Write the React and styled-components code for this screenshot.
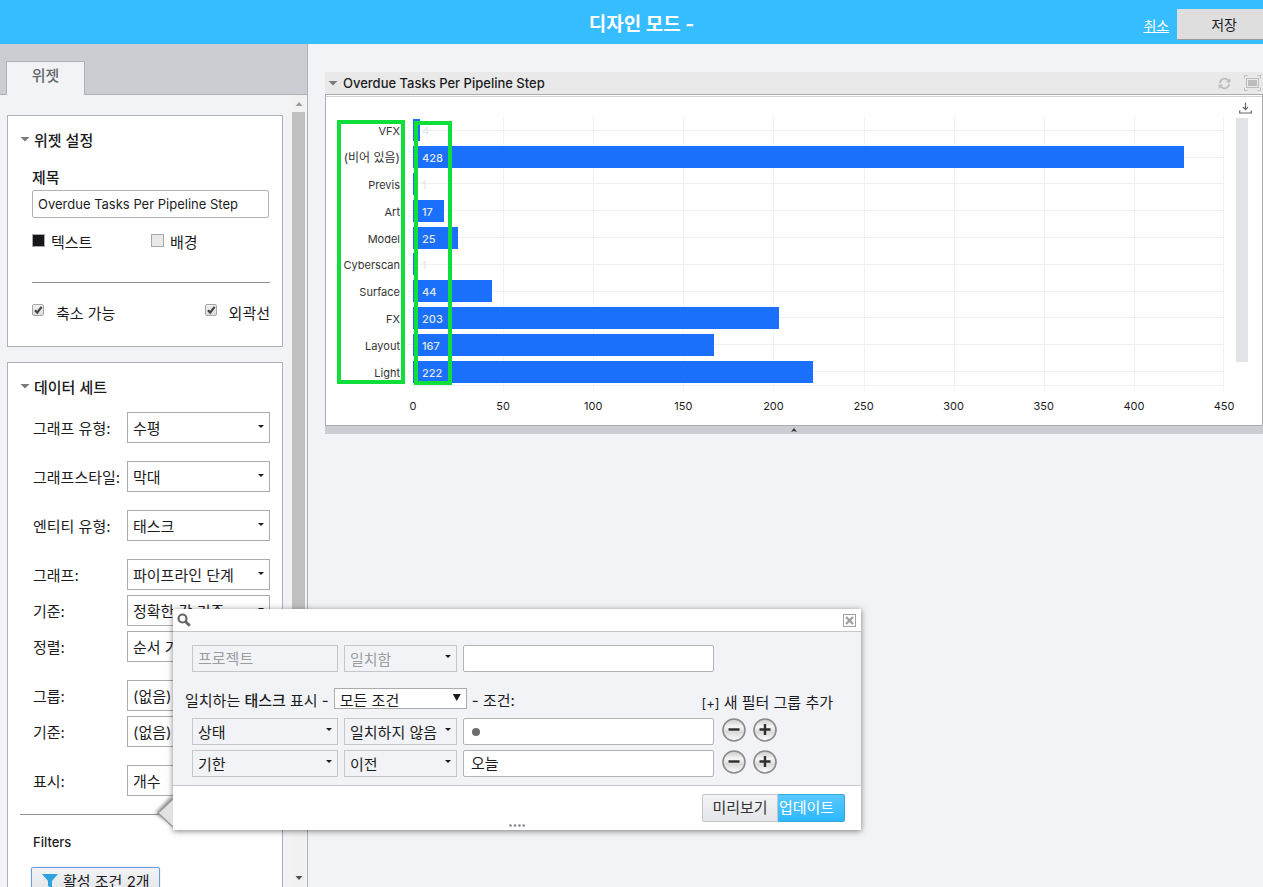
import React from "react";
import styled, { createGlobalStyle, css } from "styled-components";

const GlobalStyle = createGlobalStyle`
  *, *::before, *::after { box-sizing: border-box; }
  body { margin: 0; background: #f1f3f7; }
  body, input, select, button {
    font-family: Inter, "Noto Sans CJK KR", sans-serif;
    font-size: 15px;
    line-height: 20px;
    color: #1c1c1e;
  }
`;

const Page = styled.div`
  position: relative;
  display: flex;
  flex-direction: column;
  height: 100vh;
  overflow: hidden;
`;

const TopBar = styled.header`
  display: grid;
  grid-template-columns: 1fr auto 1fr;
  align-items: center;
  flex: none;
  height: 44px;
  padding-left: 20px;
  background: #36bdff;
`;

const Title = styled.h1`
  grid-column: 2;
  margin: 0;
  padding-top: 5px;
  font-size: 19px;
  line-height: 24px;
  font-weight: 700;
  color: #fff;
`;

const Actions = styled.div`
  display: flex;
  justify-content: flex-end;
  align-items: center;
  gap: 8px;
  padding-top: 5px;
`;

const CancelLink = styled.a`
  padding-top: 2px;
  font-size: 14px;
  color: #fff;
`;

const SaveButton = styled.button`
  height: 31px;
  padding: 2px 26px 0 34px;
  border: 0;
  border-bottom: 1px solid #9b9b9b;
  background: #dedede;
  font-size: 14px;
`;

const Main = styled.div`
  display: flex;
  flex: 1;
  min-height: 0;
`;

const Sidebar = styled.aside`
  display: flex;
  flex-direction: column;
  flex: none;
  width: 308px;
  border-right: 1px solid #b0b1b5;
`;

const TabStrip = styled.nav`
  display: flex;
  align-items: flex-end;
  flex: none;
  height: 51px;
  padding-left: 6px;
  border-bottom: 1px solid #b0b1b5;
  background: #cccdd2;
`;

const Tab = styled.button`
  width: 79px;
  height: 34px;
  margin-bottom: -1px;
  padding: 0 0 6px;
  border: 1px solid #b0b1b5;
  border-bottom: 0;
  background: #f1f3f7;
  font-weight: 500;
  color: #66676b;
`;

const SidebarBody = styled.div`
  display: flex;
  flex: 1;
  min-height: 0;
`;

const Panels = styled.div`
  display: flex;
  flex-direction: column;
  gap: 15px;
  flex: 1;
  padding: 20px 9px 0 7px;
  overflow: hidden;
`;

const ScrollRail = styled.div`
  display: flex;
  flex-direction: column;
  align-items: center;
  width: 13px;
  margin-right: 2px;
  background: #f1f1f1;
`;

const ScrollArrow = styled.svg`
  flex: none;
  width: 8px;
  height: 17px;
`;

const Thumb = styled.div`
  width: 13px;
  flex: 0 1 640px;
  background: #c0c0c0;
`;

const ScrollGap = styled.div`
  flex: 1 0 70px;
`;

const Panel = styled.section`
  flex: none;
  padding: 14px 12px 22px;
  border: 1px solid #b0b1b5;
  background: #fff;
`;

const PanelTitle = styled.h2`
  display: flex;
  align-items: center;
  gap: 4px;
  margin: 0;
  padding-top: 1px;
  font-size: 15px;
  line-height: 20px;
  font-weight: 500;
`;

const Disclosure = styled.span`
  width: 10px;
  height: 5px;
  margin-bottom: ${(p) => p.$lift || 0}px;
  background: #7b7b7b;
  clip-path: polygon(0 0, 100% 0, 50% 100%);
`;

const Settings = styled.div`
  padding: 17px 0 0 12px;
`;

const FieldLabel = styled.label`
  display: block;
  padding-bottom: 2px;
  font-weight: 500;
`;

const inputBox = css`
  border: 1px solid #b2b3b5;
  border-radius: 2px;
  background: #fff;
`;

const TitleInput = styled.input`
  ${inputBox}
  display: block;
  width: 237px;
  height: 28px;
  padding: 0 5px;
  font-size: 13px;
`;

const Swatches = styled.div`
  display: flex;
  padding: 15px 0 29px;
`;

const SwatchButton = styled.button`
  display: flex;
  align-items: flex-start;
  gap: 6px;
  width: 119px;
  padding: 0;
  border: 0;
  background: none;
`;

const SwatchColor = styled.span`
  width: 13px;
  height: 13px;
  margin-top: 1px;
  border: 1px solid #a9a9ab;
  background: ${(p) => p.$color};
`;

const Rule = styled.hr`
  margin: 0;
  border: 0;
  border-top: 1px solid #8f9092;
`;

const Checks = styled.div`
  display: flex;
  justify-content: space-between;
  padding-top: 21px;
`;

const CheckLabel = styled.label`
  display: flex;
  align-items: flex-start;
  gap: 12px;
`;

const CheckWrap = styled.span`
  display: grid;
  & > * { grid-area: 1 / 1; }
  svg { width: 12px; height: 12px; pointer-events: none; visibility: hidden; }
  input:checked + svg { visibility: visible; }
`;

const CheckInput = styled.input`
  appearance: none;
  width: 12px;
  height: 12px;
  margin: 0;
  border: 1px solid #a6a6a6;
  border-radius: 2px;
  background: linear-gradient(#f0f0f0, #dcdcdc);
`;

const FieldGroups = styled.div`
  padding-top: 14px;
`;

const FieldGroup = styled.div`
  display: flex;
  flex-direction: column;
  gap: ${(p) => p.$gap}px;
  padding: 0 0 18px 13px;
`;

const Field = styled.div`
  display: flex;
  justify-content: space-between;
  align-items: center;
  label { white-space: nowrap; padding-top: 3px; }
`;

const SelectWrap = styled.span`
  display: grid;
  width: ${(p) => p.$width}px;
  & > * { grid-area: 1 / 1; }
`;

const SelectBox = styled.select`
  appearance: none;
  width: 100%;
  height: ${(p) => p.$height}px;
  padding: 2px 5px 0;
  border: 1px solid ${(p) => (p.$muted ? "#c5c7ca" : "#abacae")};
  border-radius: 0;
  background: ${(p) => (p.$muted ? "#f1f3f7" : "#fff")};
  color: #1c1c1e;
  opacity: 1;
  &:disabled { color: #9b9da1; }
`;

const Caret = styled.span`
  justify-self: end;
  width: ${(p) => (p.$large ? 8 : 6)}px;
  height: ${(p) => (p.$large ? 7 : 3)}px;
  margin: ${(p) => (p.$large ? 6 : p.$compact ? 10 : 13)}px 6px 0 0;
  background: #1c1c1e;
  clip-path: polygon(0 0, 100% 0, 50% 100%);
  pointer-events: none;
`;

const Filters = styled.div`
  padding: 17px 0 0 11px;
`;

const FiltersTitle = styled.h3`
  margin: 0 0 15px 2px;
  font-size: 13px;
  line-height: 20px;
  font-weight: 500;
`;

const FilterButton = styled.button`
  display: flex;
  align-items: center;
  gap: 5px;
  height: 29px;
  padding: 0 9px 0 10px;
  border: 1px solid #6f9ae0;
  border-radius: 2px;
  box-shadow: 0 0 1px #6f9ae0;
  background: linear-gradient(#f2f3f5, #e2e3e6);
  white-space: nowrap;
`;

const Canvas = styled.main`
  flex: 1;
  min-width: 0;
  padding: 28px 0 0 17px;
`;

const WidgetHeader = styled.header`
  display: flex;
  align-items: center;
  height: 22px;
  padding: 0 2px 0 3px;
  background: #e9e9e9;
`;

const WidgetTitle = styled.h2`
  display: flex;
  align-items: center;
  gap: 5px;
  flex: 1;
  margin: 0;
  font-size: 13px;
  line-height: 20px;
  font-weight: 500;
`;

const IconButton = styled.button`
  display: flex;
  padding: 0;
  border: 0;
  background: none;
`;

const HeaderIcons = styled.div`
  display: flex;
  align-items: center;
  gap: 13px;
`;

const WidgetBody = styled.div`
  position: relative;
  display: grid;
  grid-template-columns: 1fr 38px;
  height: 332px;
  border: 1px solid #abacb1;
  background: #fff;
  box-shadow: inset 0 1px #fff, inset 0 2px #d0d1d5;
`;

const WidgetFooter = styled.button`
  display: flex;
  justify-content: center;
  align-items: center;
  width: 100%;
  height: 8px;
  padding: 0;
  border: 0;
  background: #cccdd2;
`;

const Chart = styled.div`
  display: grid;
  grid-template-columns: 87px 1fr;
  grid-template-rows: 268px 30px;
  align-content: start;
  padding-top: 22px;
`;

const GridLines = styled.div`
  grid-area: 1 / 2;
  display: grid;
  grid-template-columns: repeat(9, 1fr);
  height: 274px;
`;

const GridCell = styled.span`
  border-left: 1px solid #f2f2f3;
  &:last-child { border-right: 1px solid #f2f2f3; }
`;

const Rows = styled.ul`
  grid-area: 1 / 1 / 2 / 3;
  z-index: 1;
  display: grid;
  grid-template-rows: repeat(10, 1fr);
  margin: 0;
  padding: 0;
  list-style: none;
`;

const Row = styled.li`
  display: grid;
  grid-template-columns: 82px 5px 1fr;
  align-items: center;
`;

const RowLabel = styled.span`
  padding: 2px 8px 0 0;
  font-size: 11px;
  line-height: 16px;
  text-align: right;
  white-space: nowrap;
  color: #333;
  &:lang(ko) { font-size: 12px; }
`;

const Track = styled.span`
  grid-column: 2 / 4;
  padding-left: 5px;
  background: linear-gradient(#f0f0f1, #f0f0f1) center / 100% 1px no-repeat;
`;

const Bar = styled.span`
  display: flex;
  align-items: center;
  height: 22px;
  background: #1a70fb;
`;

const BarValue = styled.span`
  margin-left: 9px;
  padding-top: 2px;
  font-size: 11px;
  font-weight: 500;
  color: #e4e7eb;
`;

const AxisBottom = styled.div`
  grid-area: 2 / 2;
  display: flex;
  justify-content: space-between;
  padding-top: 12px;
  border-top: 1px solid #f0f0f1;
`;

const Tick = styled.span`
  display: flex;
  justify-content: center;
  width: 0;
  font-size: 11px;
  line-height: 16px;
`;

const ChartSide = styled.div`
  display: flex;
  flex-direction: column;
  align-items: flex-start;
  gap: 4px;
  padding: 7px 0 0 12px;
`;

const Download = styled(IconButton)`
  margin-left: 3px;
`;

const ZoomRail = styled.div`
  width: 12px;
  height: 244px;
  background: #e2e4e8;
`;

const Highlight = styled.div`
  position: absolute;
  z-index: 2;
  top: ${(p) => p.$top}px;
  left: ${(p) => p.$left}px;
  width: ${(p) => p.$width}px;
  height: 264px;
  border: 4px solid #0fdf3b;
  pointer-events: none;
`;

const Popup = styled.form`
  position: absolute;
  z-index: 5;
  left: 173px;
  top: 609px;
  width: 688px;
  background: #f1f3f7;
  box-shadow: 0 1px 6px rgba(0, 0, 0, 0.5);
`;

const Pointer = styled.svg`
  position: absolute;
  left: -22px;
  top: 182px;
  width: 22px;
  height: 40px;
`;

const PopupHeader = styled.div`
  display: flex;
  justify-content: space-between;
  align-items: center;
  height: 23px;
  padding: 0 5px 0 4px;
  border-bottom: 1px solid #c6c7ca;
  background: #fff;
`;

const PopupBody = styled.div`
  display: flex;
  flex-direction: column;
  gap: 5px;
  padding: 13px 28px 8px 19px;
`;

const FilterRow = styled.div`
  display: flex;
  align-items: center;
  gap: 6px;
`;

const ValueInput = styled.input`
  ${inputBox}
  width: 251px;
  height: 27px;
  padding: 0 7px 2px;
`;

const DisabledInput = styled.input`
  width: 146px;
  height: 27px;
  padding: 0 5px;
  border: 1px solid #c5c7ca;
  background: #f1f3f7;
  &::placeholder { color: #9b9da1; opacity: 1; }
`;

const StatusBox = styled.div`
  ${inputBox}
  display: flex;
  align-items: center;
  width: 251px;
  height: 27px;
  padding: 0 8px;
`;

const StatusDot = styled.span`
  width: 8px;
  height: 8px;
  border-radius: 50%;
  background: #6e6e6e;
`;

const RoundButtons = styled.div`
  display: flex;
  gap: 7px;
  margin-left: 2px;
  padding-bottom: 3px;
`;

const MatchRow = styled.div`
  display: flex;
  align-items: center;
  gap: 5px;
  margin: 7px 0 0 -7px;
  white-space: nowrap;
  strong { font-weight: 500; }
`;

const MatchText = styled.label`
  padding-top: 4px;
`;

const AddGroup = styled.button`
  margin-left: auto;
  padding: 9px 0 0;
  border: 0;
  background: none;
  small { font-size: 13px; }
`;

const PopupFooter = styled.div`
  display: grid;
  grid-template-columns: 1fr auto 1fr;
  height: 45px;
  padding: 8px 16px 0 0;
  border-top: 1px solid #c6c7ca;
  background: #fff;
`;

const Grip = styled.svg`
  grid-column: 2;
  align-self: end;
  width: 16px;
  height: 3px;
  margin: 0 0 3px 16px;
`;

const FooterButtons = styled.div`
  display: flex;
  justify-content: flex-end;
`;

const FooterButton = styled.button`
  width: ${(p) => (p.$primary ? 67 : 76)}px;
  height: 28px;
  padding: ${(p) => (p.$primary ? "0 9px 0 0" : "0")};
  border: 1px solid ${(p) => (p.$primary ? "#35a7e0" : "#c3c4c7")};
  border-width: ${(p) => (p.$primary ? "1px 1px 1px 0" : "1px")};
  border-radius: ${(p) => (p.$primary ? "0 2px 2px 0" : "2px 0 0 2px")};
  background: ${(p) => (p.$primary ? "linear-gradient(#5ac8ff, #2db8fe)" : "linear-gradient(#f3f4f6, #e4e5e8)")};
  color: ${(p) => (p.$primary ? "#fff" : "#333")};
  white-space: nowrap;
`;

function Dropdown({ id, value, width = 143, height = 31, muted, disabled, large, label }) {
  return (
    <SelectWrap $width={width}>
      <SelectBox id={id} aria-label={label} $height={height} $muted={muted} disabled={disabled} defaultValue={value}>
        <option>{value}</option>
      </SelectBox>
      <Caret $large={large} $compact={muted} />
    </SelectWrap>
  );
}

function Check({ children }) {
  return (
    <CheckLabel>
      <CheckWrap>
        <CheckInput type="checkbox" defaultChecked />
        <svg viewBox="0 0 12 12"><path d="M3 6.3L5.2 8.6L9.6 2.8" fill="none" stroke="#444" strokeWidth="2.2" /></svg>
      </CheckWrap>
      {children}
    </CheckLabel>
  );
}

function RoundButton({ kind }) {
  return (
    <IconButton type="button" aria-label={kind === "plus" ? "추가" : "제거"}>
      <svg width="24" height="24" viewBox="0 0 24 24">
        <defs>
          <linearGradient id="round" x1="0" y1="0" x2="0" y2="1">
            <stop offset="0" stopColor="#c9c9c9" />
            <stop offset="0.35" stopColor="#f6f6f6" />
            <stop offset="0.6" stopColor="#d9d9d9" />
            <stop offset="1" stopColor="#ffffff" />
          </linearGradient>
        </defs>
        <circle cx="12" cy="12" r="11" fill="url(#round)" stroke="#8a8a8a" strokeWidth="1.6" />
        <path d={kind === "plus" ? "M6.5 11.5H17.5M12 6V17" : "M6.5 11.5H17.5"} stroke="#2d2d2d" strokeWidth="2.4" />
      </svg>
    </IconButton>
  );
}

const fieldGroups = [
  { gap: 18, fields: [["그래프 유형:", "수평"], ["그래프스타일:", "막대"], ["엔티티 유형:", "태스크"]] },
  { gap: 5, fields: [["그래프:", "파이프라인 단계"], ["기준:", "정확한 값 기준"], ["정렬:", "순서 기준"]] },
  { gap: 5, fields: [["그룹:", "(없음)"], ["기준:", "(없음)"]] },
  { gap: 5, fields: [["표시:", "개수"]] },
];

const steps = [
  ["VFX", 4], ["(비어 있음)", 428, "ko"], ["Previs", 1], ["Art", 17], ["Model", 25],
  ["Cyberscan", 1], ["Surface", 44], ["FX", 203], ["Layout", 167], ["Light", 222],
];
const axisMax = 450;
const ticks = [0, 50, 100, 150, 200, 250, 300, 350, 400, 450];

function FilterPopup() {
  return (
    <Popup onSubmit={(e) => e.preventDefault()}>
      <Pointer viewBox="0 0 22 40">
        <defs><filter id="soft" x="-50%" y="-50%" width="200%" height="200%"><feGaussianBlur stdDeviation="2" /></filter></defs>
        <path d="M22 5L5 22L22 34Z" fill="#000" opacity="0.55" filter="url(#soft)" />
        <path d="M22 8L7 22L22 36Z" fill="#e2e2e2" />
        <path d="M22 8L7 22L22 36" fill="none" stroke="#999" strokeWidth="1.4" />
      </Pointer>
      <PopupHeader>
        <svg width="14" height="14" viewBox="0 0 14 14" fill="none" stroke="#666">
          <circle cx="5.5" cy="5.5" r="4" strokeWidth="2.2" />
          <path d="M8.4 8.4L12.8 12.8" strokeWidth="2.8" />
        </svg>
        <IconButton type="button" aria-label="닫기">
          <svg width="13" height="13" viewBox="0 0 13 13" fill="none" stroke="#a0a0a0">
            <rect x="0.5" y="0.5" width="12" height="12" fill="#fff" />
            <path d="M3 3L10 10M10 3L3 10" strokeWidth="2.4" />
          </svg>
        </IconButton>
      </PopupHeader>
      <PopupBody>
        <FilterRow>
          <DisabledInput placeholder="프로젝트" aria-label="프로젝트" disabled />
          <Dropdown value="일치함" label="프로젝트 조건" width={113} height={27} muted disabled />
          <ValueInput aria-label="프로젝트 값" />
        </FilterRow>
        <MatchRow>
          <MatchText htmlFor="match">일치하는 <strong>태스크</strong> 표시 -</MatchText>
          <Dropdown id="match" value="모든 조건" width={133} height={21} large />
          <MatchText as="span">- 조건:</MatchText>
          <AddGroup type="button"><small>[+]</small> 새 필터 그룹 추가</AddGroup>
        </MatchRow>
        <FilterRow>
          <Dropdown value="상태" label="필드 1" width={146} height={27} muted />
          <Dropdown value="일치하지 않음" label="조건 1" width={113} height={27} muted />
          <StatusBox><StatusDot /></StatusBox>
          <RoundButtons><RoundButton kind="minus" /><RoundButton kind="plus" /></RoundButtons>
        </FilterRow>
        <FilterRow>
          <Dropdown value="기한" label="필드 2" width={146} height={27} muted />
          <Dropdown value="이전" label="조건 2" width={113} height={27} muted />
          <ValueInput defaultValue="오늘" aria-label="기한 값" />
          <RoundButtons><RoundButton kind="minus" /><RoundButton kind="plus" /></RoundButtons>
        </FilterRow>
      </PopupBody>
      <PopupFooter>
        <Grip viewBox="0 0 16 3" fill="#858585">
          <circle cx="1.5" cy="1.5" r="1.3" /><circle cx="6" cy="1.5" r="1.3" />
          <circle cx="10.5" cy="1.5" r="1.3" /><circle cx="14.7" cy="1.5" r="1.3" />
        </Grip>
        <FooterButtons>
          <FooterButton type="button">미리보기</FooterButton>
          <FooterButton $primary>업데이트</FooterButton>
        </FooterButtons>
      </PopupFooter>
    </Popup>
  );
}

export default function App() {
  return (
    <Page>
      <GlobalStyle />
      <TopBar>
        <Title>디자인 모드 -</Title>
        <Actions>
          <CancelLink href="#cancel">취소</CancelLink>
          <SaveButton>저장</SaveButton>
        </Actions>
      </TopBar>
      <Main>
        <Sidebar>
          <TabStrip><Tab>위젯</Tab></TabStrip>
          <SidebarBody>
            <Panels>
              <Panel>
                <PanelTitle><Disclosure $lift={4} />위젯 설정</PanelTitle>
                <Settings>
                  <FieldLabel htmlFor="widget-title">제목</FieldLabel>
                  <TitleInput id="widget-title" defaultValue="Overdue Tasks Per Pipeline Step" />
                  <Swatches>
                    <SwatchButton><SwatchColor $color="#161719" />텍스트</SwatchButton>
                    <SwatchButton><SwatchColor $color="#e9e9e9" />배경</SwatchButton>
                  </Swatches>
                  <Rule />
                  <Checks><Check>축소 가능</Check><Check>외곽선</Check></Checks>
                </Settings>
              </Panel>
              <Panel>
                <PanelTitle><Disclosure $lift={4} />데이터 세트</PanelTitle>
                <FieldGroups>
                  {fieldGroups.map((group, g) => (
                    <FieldGroup key={g} $gap={group.gap}>
                      {group.fields.map(([label, value], f) => (
                        <Field key={f}>
                          <label htmlFor={`field-${g}-${f}`}>{label}</label>
                          <Dropdown id={`field-${g}-${f}`} value={value} />
                        </Field>
                      ))}
                    </FieldGroup>
                  ))}
                </FieldGroups>
                <Rule />
                <Filters>
                  <FiltersTitle>Filters</FiltersTitle>
                  <FilterButton>
                    <svg width="16" height="15" viewBox="0 0 16 15" fill="#2fa4dc"><path d="M0 0H16L10 7V15L6 12V7Z" /></svg>
                    활성 조건 2개
                  </FilterButton>
                </Filters>
              </Panel>
            </Panels>
            <ScrollRail>
              <ScrollArrow viewBox="0 0 8 17"><path d="M0.5 11L4 7L7.5 11Z" fill="#9c9c9c" /></ScrollArrow>
              <Thumb />
              <ScrollGap />
              <ScrollArrow viewBox="0 0 8 17"><path d="M0.5 6L4 10L7.5 6Z" fill="#505050" /></ScrollArrow>
            </ScrollRail>
          </SidebarBody>
        </Sidebar>
        <Canvas>
          <WidgetHeader>
            <WidgetTitle><Disclosure />Overdue Tasks Per Pipeline Step</WidgetTitle>
            <HeaderIcons>
              <IconButton aria-label="새로 고침">
                <svg width="13" height="13" viewBox="0 0 13 13" fill="none" stroke="#bdbdbd" strokeWidth="1.8">
                  <path d="M1.8 6A4.8 4.8 0 0 1 10.2 3.4M11.2 7A4.8 4.8 0 0 1 2.8 9.6" />
                  <path d="M12.3 1V5.6H7.8ZM0.7 12V7.4H5.2Z" fill="#bdbdbd" stroke="none" />
                </svg>
              </IconButton>
              <IconButton aria-label="전체 화면">
                <svg width="17" height="16" viewBox="0 0 17 16" fill="none" stroke="#bdbdbd">
                  <path d="M0.5 3.5V0.5H3.5M13.5 0.5H16.5V3.5M16.5 12.5V15.5H13.5M3.5 15.5H0.5V12.5" />
                  <rect x="2.5" y="3.5" width="12" height="9" />
                  <rect x="4.5" y="5.5" width="8" height="5" fill="#bdbdbd" />
                </svg>
              </IconButton>
            </HeaderIcons>
          </WidgetHeader>
          <WidgetBody>
            <Chart>
              <GridLines>{ticks.slice(1).map((t) => <GridCell key={t} />)}</GridLines>
              <Rows>
                {steps.map(([name, count, lang]) => (
                  <Row key={name}>
                    <RowLabel lang={lang}>{name}</RowLabel>
                    <Track>
                      <Bar style={{ width: `${(count / axisMax) * 100}%` }}><BarValue>{count}</BarValue></Bar>
                    </Track>
                  </Row>
                ))}
              </Rows>
              <AxisBottom>{ticks.map((t) => <Tick key={t}>{t}</Tick>)}</AxisBottom>
            </Chart>
            <ChartSide>
              <Download aria-label="다운로드">
                <svg width="13" height="12" viewBox="0 0 13 12" fill="none" stroke="#666" strokeWidth="1.2">
                  <path d="M6.5 0.5V7.5M4 5L6.5 7.7L9 5M0.7 8.5V11H12.3V8.5" />
                </svg>
              </Download>
              <ZoomRail />
            </ChartSide>
            <Highlight $top={25} $left={11} $width={68} />
            <Highlight $top={26} $left={88} $width={38} />
          </WidgetBody>
          <WidgetFooter aria-label="접기">
            <svg width="6" height="4" viewBox="0 0 6 4"><path d="M0 4L3 0L6 4L3 3Z" fill="#333" /></svg>
          </WidgetFooter>
        </Canvas>
      </Main>
      <FilterPopup />
    </Page>
  );
}
